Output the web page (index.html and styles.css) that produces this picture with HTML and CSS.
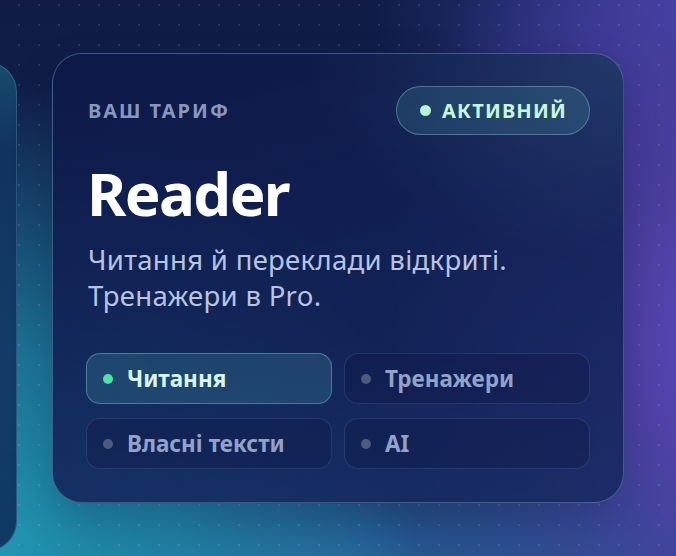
FILE: index.html
```html
<!DOCTYPE html>
<html lang="uk">
<head>
<meta charset="utf-8">
<title>Тариф</title>
<link rel="stylesheet" href="styles.css">
</head>
<body>
<div class="stage">
  <div class="track">
    <section class="card card-prev" aria-hidden="true"></section>
    <section class="card plan">
      <header class="plan-head">
        <span class="eyebrow">Ваш тариф</span>
        <span class="badge"><span class="badge-dot"></span>Активний</span>
      </header>
      <h1 class="plan-name">Reader</h1>
      <p class="plan-desc">Читання й переклади відкриті.<br>Тренажери в Pro.</p>
      <ul class="features">
        <li class="feature on"><span class="fdot"></span>Читання</li>
        <li class="feature"><span class="fdot"></span>Тренажери</li>
        <li class="feature"><span class="fdot"></span>Власні тексти</li>
        <li class="feature"><span class="fdot"></span>AI</li>
      </ul>
    </section>
  </div>
</div>
</body>
</html>
```

FILE: styles.css
```css
* { box-sizing: border-box; }
html, body { margin: 0; padding: 0; }
body {
  width: 676px;
  height: 556px;
  overflow: hidden;
  font-family: "Noto Sans", "Open Sans", "DejaVu Sans", sans-serif;
  background: #101c46;
}
.stage {
  position: relative;
  width: 676px;
  height: 556px;
  overflow: hidden;
  background:
    radial-gradient(circle, rgba(200, 215, 255, 0.14) 0.9px, transparent 1.4px) 9px 15px / 20px 20px,
    radial-gradient(ellipse 62% 85% at 0% 100%, rgba(32, 150, 178, 1) 0%, rgba(32, 150, 178, 0.7) 42%, rgba(32, 150, 178, 0) 100%),
    radial-gradient(ellipse 60% 45% at 50% 108%, rgba(44, 106, 165, 1) 0%, rgba(44, 106, 165, 0) 100%),
    radial-gradient(ellipse 50% 95% at 106% 62%, rgba(92, 72, 186, 1) 0%, rgba(92, 72, 186, 0.6) 50%, rgba(92, 72, 186, 0) 100%),
    radial-gradient(ellipse 45% 35% at 100% 0%, rgba(56, 62, 156, 0.9) 0%, rgba(56, 62, 156, 0) 100%),
    linear-gradient(180deg, #101c47 0%, #152556 100%);
}
.track {
  display: flex;
  align-items: flex-start;
  gap: 35px;
}
.card {
  flex: none;
  border-radius: 30px;
}
.card-prev {
  width: 300px;
  height: 489px;
  margin-left: -283px;
  margin-top: 62px;
  border: 1px solid rgba(120, 170, 200, 0.28);
  background:
    linear-gradient(180deg, rgba(24, 84, 116, 0.85) 0%, rgba(17, 50, 94, 0.9) 18%, rgba(18, 56, 100, 0.92) 60%, rgba(14, 52, 96, 0.95) 100%);
}
.plan {
  width: 572px;
  height: 450px;
  margin-top: 53px;
  padding: 32px 33px 33px 33px;
  border: 1px solid rgba(120, 165, 190, 0.42);
  background:
    radial-gradient(ellipse 55% 45% at 100% 0%, rgba(70, 110, 150, 0.32) 0%, rgba(70, 110, 150, 0) 100%),
    linear-gradient(165deg, rgba(13, 25, 72, 0.95) 0%, rgba(18, 34, 86, 0.9) 55%, rgba(22, 40, 96, 0.86) 100%);
  box-shadow: 0 18px 40px rgba(8, 12, 40, 0.22);
  display: flex;
  flex-direction: column;
}
.plan-head {
  display: flex;
  justify-content: space-between;
  align-items: center;
}
.eyebrow {
  margin-left: 2px;
  font-size: 20px;
  font-weight: 700;
  letter-spacing: 2px;
  text-transform: uppercase;
  color: #8797bd;
}
.badge {
  display: inline-flex;
  align-items: center;
  gap: 11px;
  height: 49px;
  padding: 0 22px 0 23px;
  border-radius: 999px;
  border: 1px solid rgba(110, 180, 195, 0.5);
  background: rgba(85, 185, 175, 0.18);
  color: #c6f7df;
  font-size: 20px;
  font-weight: 700;
  letter-spacing: 1.2px;
  text-transform: uppercase;
}
.badge-dot {
  width: 11px;
  height: 11px;
  border-radius: 50%;
  background: #b8f4d6;
}
.plan-name {
  margin: 25px 0 0 0;
  font-size: 60px;
  line-height: 66px;
  font-weight: 700;
  letter-spacing: -1.6px;
  color: #ffffff;
  padding-left: 1px;
}
.plan-desc {
  margin: 16px 0 0 2px;
  font-size: 27.5px;
  line-height: 36px;
  letter-spacing: 0.3px;
  color: #b8c4e0;
}
.features {
  list-style: none;
  margin: auto 0 0 0;
  padding: 0;
  display: grid;
  grid-template-columns: 1fr 1fr;
  grid-auto-rows: 51px;
  column-gap: 12px;
  row-gap: 14px;
}
.feature {
  display: flex;
  align-items: center;
  gap: 14px;
  padding: 0 16px;
  border-radius: 14px;
  border: 1px solid rgba(110, 140, 200, 0.22);
  background: rgba(14, 24, 70, 0.35);
  color: #92a2c8;
  font-size: 22.5px;
  font-weight: 700;
}
.feature.on {
  border-color: rgba(100, 175, 190, 0.55);
  background: rgba(72, 165, 170, 0.24);
  color: #d9f7ef;
}
.fdot {
  flex: none;
  width: 10px;
  height: 10px;
  border-radius: 50%;
  background: #4d5a7c;
}
.feature.on .fdot {
  background: #4fe0a4;
}
```
